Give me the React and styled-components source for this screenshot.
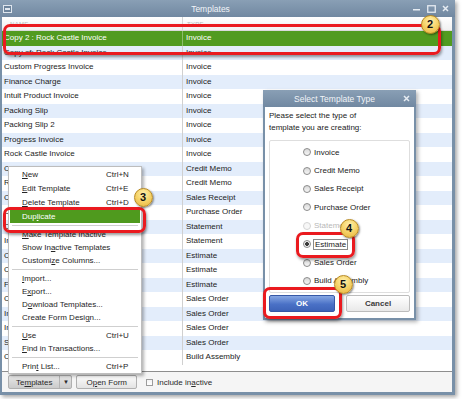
import React from "react";
import styled, { createGlobalStyle } from "styled-components";

const GlobalStyle = createGlobalStyle`
  html, body {
    margin: 0;
    padding: 0;
    background: #ffffff;
  }
  body {
    font-family: "Liberation Sans", Arial, sans-serif;
    font-size: 8px;
    color: #1c1c1c;
  }
`;

const FRAME = "#7890a8";

const Stage = styled.div`
  position: relative;
  width: 462px;
  height: 399px;
  overflow: hidden;
`;

const Window = styled.div`
  width: 455px;
  height: 395px;
  display: flex;
  flex-direction: column;
  box-shadow: 2px 2px 4px rgba(0, 0, 0, 0.35);
`;

const TitleBar = styled.div`
  height: 17px;
  flex: none;
  display: flex;
  align-items: center;
  padding: 0 6px 0 3px;
  background: linear-gradient(#899fb5, #7188a1);
  color: #f1f4f8;
`;

const TitleText = styled.div`
  flex: 1;
  text-align: center;
  font-size: 8.5px;
  padding-right: ${(p) => p.$shift || 0}px;
`;

const Controls = styled.div`
  display: flex;
  align-items: center;
  gap: 6px;
`;

const Frame = styled.div`
  flex: 1;
  display: flex;
  flex-direction: column;
  border: solid ${FRAME};
  border-width: 0 3px 3px 2px;
  background: #ffffff;
  min-height: 0;
`;

const HeaderRow = styled.div`
  height: 14px;
  box-sizing: border-box;
  display: grid;
  grid-template-columns: 181px 1fr;
  background: linear-gradient(#ffffff, #f1f1f1);
  border-bottom: 1px solid #dadada;
  color: #b8b8b8;
  font-size: 6px;
  letter-spacing: 0.3px;
`;

const HeaderCell = styled.div`
  display: flex;
  align-items: center;
  padding-left: ${(p) => (p.$first ? 8 : 4)}px;
  border-right: ${(p) => (p.$first ? "1px solid #d4d4d4" : "none")};
`;

const List = styled.div`
  flex: 1;
  overflow: hidden;
`;

const Row = styled.div`
  display: grid;
  grid-template-columns: 181px 1fr;
  height: 14.5px;
  line-height: 14.5px;
  white-space: nowrap;
  background: ${(p) => (p.$selected ? "#519b20" : p.$alt ? "#e3edfb" : "#ffffff")};
  color: ${(p) => (p.$selected ? "#ffffff" : "#1c1c1c")};
`;

const NameCell = styled.div`
  padding-left: 2px;
  overflow: hidden;
  border-right: 1px solid ${(p) => (p.$selected ? "#8dbd6c" : "#d0d0d0")};
`;

const TypeCell = styled.div`
  padding-left: 3px;
  overflow: hidden;
`;

const Toolbar = styled.div`
  height: 21px;
  flex: none;
  box-sizing: border-box;
  display: flex;
  align-items: center;
  padding-left: 6px;
  border-top: 1px solid #8e8e8e;
  background: #f5f5f5;
  color: #2a2a2a;
`;

const ToolButton = styled.div`
  height: 14px;
  box-sizing: border-box;
  display: flex;
  align-items: center;
  border: 1px solid #b0b0b0;
  border-radius: 2px;
  margin-right: ${(p) => p.$gap || 0}px;
  background: ${(p) =>
    p.$pressed
      ? "linear-gradient(#e6e6e6, #cbcbcb)"
      : "linear-gradient(#fbfbfb, #e3e3e3)"};
`;

const ButtonLabel = styled.span`
  padding: 0 ${(p) => p.$pad}px;
  height: 100%;
  display: flex;
  align-items: center;
`;

const ArrowPart = styled.span`
  width: 11px;
  height: 100%;
  display: flex;
  align-items: center;
  justify-content: center;
  border-left: 1px solid #b4b4b4;
  font-size: 6px;
`;

const CheckBox = styled.span`
  width: 7px;
  height: 7px;
  box-sizing: border-box;
  border: 1px solid #9c9c9c;
  background: linear-gradient(#f4f4f4, #ffffff);
  margin-right: 4px;
`;

const Key = styled.u`
  text-decoration-thickness: 1px;
  text-underline-offset: 1px;
`;

/* context menu */
const Menu = styled.div`
  position: absolute;
  left: 8px;
  top: 166px;
  width: 134px;
  box-sizing: border-box;
  border: 1px solid #bdbdbd;
  background: #ffffff;
  box-shadow: 2px 2px 3px rgba(0, 0, 0, 0.3);
  color: #262626;
`;

const MenuItem = styled.div`
  display: grid;
  grid-template-columns: 84px 1fr;
  align-items: center;
  height: ${(p) => p.$h || 13}px;
  margin: 0 1px;
  padding-left: 12px;
  white-space: nowrap;
  background: ${(p) => (p.$active ? "#4f9a1e" : "transparent")};
  color: ${(p) => (p.$active ? "#ffffff" : "#262626")};
`;

const MenuSep = styled.div`
  height: 5px;
  display: flex;
  align-items: center;
  padding: 0 3px;
  &::after {
    content: "";
    flex: 1;
    height: 1px;
    background: #cfcfcf;
  }
`;

/* select template dialog */
const Dialog = styled.div`
  position: absolute;
  left: 263px;
  top: 90px;
  width: 153px;
  display: flex;
  flex-direction: column;
  box-shadow: 2px 2px 4px rgba(0, 0, 0, 0.3);
`;

const DialogBody = styled.div`
  background: #ffffff;
  border: solid ${FRAME};
  border-width: 0 2px 2px 2px;
  padding: 3px 4px 6px;
`;

const Prompt = styled.div`
  line-height: 12px;
  color: #222;
`;

const Group = styled.div`
  margin-top: 6px;
  border: 1px solid #dedede;
  border-radius: 2px;
  padding: 2px 0 2px 33px;
`;

const RadioRow = styled.div`
  height: 18.4px;
  display: flex;
  align-items: center;
  gap: ${(p) => (p.$focus ? 2 : 3)}px;
  color: ${(p) => (p.$disabled ? "#b8b8b8" : "#222")};
`;

const Radio = styled.span`
  width: 8px;
  height: 8px;
  box-sizing: border-box;
  border-radius: 50%;
  border: 1px solid ${(p) => (p.$disabled ? "#d4d4d4" : "#8b8b8b")};
  background: ${(p) =>
    p.$checked
      ? "radial-gradient(circle, #3a3a3a 0 1.6px, #f2f2f2 2.2px)"
      : p.$disabled
      ? "#f7f7f7"
      : "linear-gradient(#d9d9d9, #f6f6f6)"};
`;

const FocusLabel = styled.span`
  border: 1px solid #8a8a8a;
  padding: 0 1px;
  line-height: 9px;
`;

const ButtonRow = styled.div`
  margin-top: 2px;
  display: flex;
  justify-content: space-between;
`;

const DialogButton = styled.div`
  width: ${(p) => p.$w}px;
  height: 17px;
  box-sizing: border-box;
  display: flex;
  align-items: center;
  justify-content: center;
  font-weight: bold;
  border-radius: 2px;
  border: 1px solid ${(p) => (p.$primary ? "#3658a6" : "#bcbcbc")};
  color: ${(p) => (p.$primary ? "#ffffff" : "#3a3a3a")};
  background: ${(p) =>
    p.$primary
      ? "linear-gradient(#86a7e3, #4a71c6 55%, #3d63b8)"
      : "linear-gradient(#ffffff, #e9e9e9)"};
`;

/* annotations */
const Callout = styled.div`
  position: absolute;
  left: ${(p) => p.$x}px;
  top: ${(p) => p.$y}px;
  width: ${(p) => p.$w}px;
  height: ${(p) => p.$h}px;
  box-sizing: border-box;
  border: 3px solid #ea1a1f;
  border-radius: 7px;
  box-shadow: 1px 2px 3px rgba(0, 0, 0, 0.4);
  pointer-events: none;
`;

const Badge = styled.div`
  position: absolute;
  left: ${(p) => p.$cx - 9.5}px;
  top: ${(p) => p.$cy - 9.5}px;
  width: 19px;
  height: 19px;
  box-sizing: border-box;
  border-radius: 50%;
  border: 1px solid #b88a22;
  background: radial-gradient(circle at 50% 30%, #fff0b0 0, #f7d66d 45%, #e6b13a 100%);
  box-shadow: 1px 1px 2px rgba(0, 0, 0, 0.45);
  display: flex;
  align-items: center;
  justify-content: center;
  font-weight: bold;
  font-size: 11px;
  color: #111;
`;

const SysIcon = () => (
  <svg width="9" height="8" viewBox="0 0 9 8">
    <rect x="0.5" y="0.5" width="8" height="7" fill="#6d849c" stroke="#dfe6ee" />
    <rect x="2" y="3" width="5" height="2" fill="#dfe6ee" />
  </svg>
);

const WinControls = () => (
  <Controls>
    <svg width="8" height="8" viewBox="0 0 8 8">
      <rect x="0" y="4" width="7" height="1.5" fill="#e6ecf2" />
    </svg>
    <svg width="9" height="8" viewBox="0 0 9 8">
      <rect x="0.75" y="0.75" width="7.5" height="6.5" fill="none" stroke="#e6ecf2" strokeWidth="1.3" />
    </svg>
    <svg width="7" height="7" viewBox="0 0 7 7">
      <path d="M1 1 L6 6 M6 1 L1 6" stroke="#e6ecf2" strokeWidth="1.5" />
    </svg>
  </Controls>
);

const rows = [
  ["Copy 2 : Rock Castle Invoice", "Invoice"],
  ["Copy of: Rock Castle Invoice", "Invoice"],
  ["Custom Progress Invoice", "Invoice"],
  ["Finance Charge", "Invoice"],
  ["Intuit Product Invoice", "Invoice"],
  ["Packing Slip", "Invoice"],
  ["Packing Slip 2", "Invoice"],
  ["Progress Invoice", "Invoice"],
  ["Rock Castle Invoice", "Invoice"],
  ["Custom Credit Memo", "Credit Memo"],
  ["Retail Credit Memo", "Credit Memo"],
  ["Custom Sales Receipt", "Sales Receipt"],
  ["Custom Purchase Order", "Purchase Order"],
  ["Custom Statement", "Statement"],
  ["Intuit Standard Statement", "Statement"],
  ["Custom Estimate", "Estimate"],
  ["Custom Estimate 2", "Estimate"],
  ["Fixed Fee Estimate", "Estimate"],
  ["Custom Sales Order", "Sales Order"],
  ["Intuit Sales Order", "Sales Order"],
  ["Intuit Packing Slip", "Sales Order"],
  ["Sales Order with Rep", "Sales Order"],
  ["Custom Build Assembly", "Build Assembly"],
];

// label parts: [before, underlined, after]
const menu = [
  { l: ["", "N", "ew"], k: "Ctrl+N", h: 14 },
  { l: ["", "E", "dit Template"], k: "Ctrl+E", h: 14 },
  { l: ["", "D", "elete Template"], k: "Ctrl+D", h: 14 },
  { l: ["Dup", "l", "icate"], h: 14, active: true },
  "sep",
  { l: ["", "M", "ake Template Inactive"] },
  { l: ["Show In", "a", "ctive Templates"] },
  { l: ["Customi", "z", "e Columns..."] },
  "sep",
  { l: ["", "I", "mport..."] },
  { l: ["E", "x", "port..."] },
  { l: ["D", "o", "wnload Templates..."] },
  { l: ["Create Form Desi", "g", "n..."] },
  "sep",
  { l: ["", "U", "se"], k: "Ctrl+U" },
  { l: ["", "F", "ind in Transactions..."] },
  "sep",
  { l: ["Prin", "t", " List..."], k: "Ctrl+P" },
];

const types = [
  "Invoice",
  "Credit Memo",
  "Sales Receipt",
  "Purchase Order",
  "Statement",
  "Estimate",
  "Sales Order",
  "Build Assembly",
];

const App = () => {
  return (
    <Stage>
      <GlobalStyle />
      <Window>
        <TitleBar>
          <SysIcon />
          <TitleText $shift={4}>Templates</TitleText>
          <WinControls />
        </TitleBar>
        <Frame>
          <HeaderRow>
            <HeaderCell $first>NAME</HeaderCell>
            <HeaderCell>TYPE</HeaderCell>
          </HeaderRow>
          <List>
            {rows.map(([name, type], i) => (
              <Row key={i} $selected={i === 0} $alt={i % 2 === 1}>
                <NameCell $selected={i === 0}>{name}</NameCell>
                <TypeCell>{type}</TypeCell>
              </Row>
            ))}
          </List>
          <Toolbar>
            <ToolButton $pressed $gap={4}>
              <ButtonLabel $pad={7}>
                Te<Key>m</Key>plates
              </ButtonLabel>
              <ArrowPart>▼</ArrowPart>
            </ToolButton>
            <ToolButton $gap={9}>
              <ButtonLabel $pad={9}>
                O<Key>p</Key>en Form
              </ButtonLabel>
            </ToolButton>
            <CheckBox />
            <span>
              Include in<Key>a</Key>ctive
            </span>
          </Toolbar>
        </Frame>
      </Window>

      <Menu>
        {menu.map((m, i) =>
          m === "sep" ? (
            <MenuSep key={i} />
          ) : (
            <MenuItem key={i} $h={m.h} $active={m.active}>
              <span>
                {m.l[0]}
                <Key>{m.l[1]}</Key>
                {m.l[2]}
              </span>
              <span>{m.k || ""}</span>
            </MenuItem>
          )
        )}
      </Menu>

      <Dialog>
        <TitleBar>
          <TitleText $shift={0}>Select Template Type</TitleText>
          <svg width="7" height="7" viewBox="0 0 7 7">
            <path d="M1 1 L6 6 M6 1 L1 6" stroke="#e6ecf2" strokeWidth="1.5" />
          </svg>
        </TitleBar>
        <DialogBody>
          <Prompt>
            Please select the type of
            <br />
            template you are creating:
          </Prompt>
          <Group>
            {types.map((t) => (
              <RadioRow
                key={t}
                $disabled={t === "Statement"}
                $focus={t === "Estimate"}
              >
                <Radio
                  $checked={t === "Estimate"}
                  $disabled={t === "Statement"}
                />
                {t === "Estimate" ? <FocusLabel>{t}</FocusLabel> : t}
              </RadioRow>
            ))}
          </Group>
          <ButtonRow>
            <DialogButton $primary $w={66}>
              OK
            </DialogButton>
            <DialogButton $w={64}>Cancel</DialogButton>
          </ButtonRow>
        </DialogBody>
      </Dialog>

      <Callout $x={3} $y={24} $w={438} $h={31} />
      <Badge $cx={430} $cy={24}>2</Badge>
      <Callout $x={3} $y={207} $w={143} $h={26} />
      <Badge $cx={143} $cy={197}>3</Badge>
      <Callout $x={296} $y={232} $w={59} $h={26} />
      <Badge $cx={349} $cy={228}>4</Badge>
      <Callout $x={263} $y={287} $w={79} $h={32} />
      <Badge $cx={343} $cy={284}>5</Badge>
    </Stage>
  );
};

export default App;
